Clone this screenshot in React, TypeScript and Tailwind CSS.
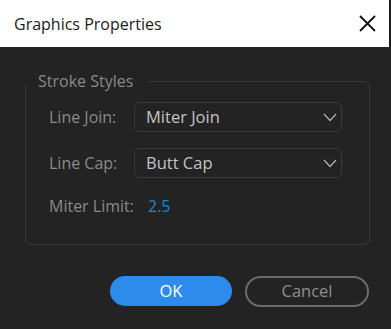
import * as React from "react";

const Chevron = () => (
  <svg width="14" height="9" viewBox="0 0 14 9" fill="none">
    <polyline points="1,1 7,7.5 13,1" stroke="#b0b0b0" strokeWidth="1.3" />
  </svg>
);

const Select = ({ value }: { value: string }) => (
  <div className="flex h-[30px] flex-1 items-center justify-between rounded-[6px] border border-[#3a3a3a] pl-[11px] pr-[4px] text-[16.5px] text-[#c4c4c4]">
    <span>{value}</span>
    <Chevron />
  </div>
);

export default function App() {
  return (
    <div
      className="flex h-[329px] w-[391px] flex-col bg-[#232323]"
      style={{ fontFamily: '"Open Sans", "Noto Sans", sans-serif' }}
    >
      <div className="flex h-[47px] items-center justify-between border-r-2 border-[#1c1c1c] bg-white pl-[14px] pr-[13px]">
        <span className="text-[16px] text-[#1a1a1a]">Graphics Properties</span>
        <svg width="17" height="17" viewBox="0 0 17 17">
          <path d="M1 1 L16 16 M16 1 L1 16" stroke="#111" strokeWidth="1.8" />
        </svg>
      </div>

      <fieldset className="ml-[25px] mr-[21px] mt-[23px] rounded-[6px] border border-[#393939] pb-[27px] pl-[23px] pr-[27px]">
        <legend className="-ml-[23px] pl-[12px] pr-[16px] text-[16px] leading-[22px] text-[#8a8a8a]">
          Stroke Styles
        </legend>
        <div className="mt-[10px] flex flex-col gap-[16px]">
          <div className="flex items-center">
            <span className="w-[85px] text-[16px] text-[#8a8a8a]">Line Join:</span>
            <Select value="Miter Join" />
          </div>
          <div className="flex items-center">
            <span className="w-[85px] text-[16px] text-[#8a8a8a]">Line Cap:</span>
            <Select value="Butt Cap" />
          </div>
          <div className="mt-[1px] flex h-[22px] items-center">
            <span className="w-[99px] text-[16px] text-[#8a8a8a]">Miter Limit:</span>
            <span className="text-[16px] text-[#1b87d2]">2.5</span>
          </div>
        </div>
      </fieldset>

      <div className="mt-[31px] flex justify-end gap-[13px] pr-[22px]">
        <button className="h-[30px] w-[122px] rounded-full bg-[#2d8ceb] text-[16.5px] text-white">
          OK
        </button>
        <button className="h-[31px] w-[124px] rounded-full border-2 border-[#6b6b6b] text-[16.5px] text-[#8e8e8e]">
          Cancel
        </button>
      </div>
    </div>
  );
}
